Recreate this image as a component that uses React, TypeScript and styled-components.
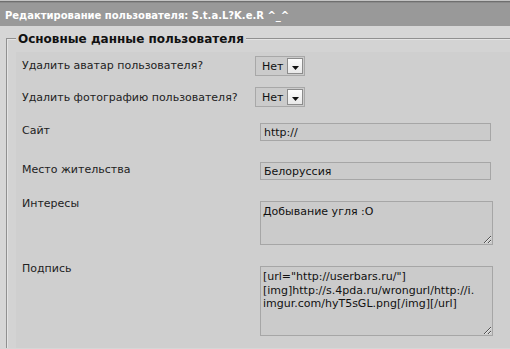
import React from 'react'
import styled, { createGlobalStyle } from 'styled-components'

const GlobalStyle = createGlobalStyle`
  html, body {
    margin: 0;
    padding: 0;
    background: #d6d6d6;
    overflow: hidden;
  }
  body {
    font-family: "DejaVu Sans", Verdana, sans-serif;
    font-size: 11px;
    color: #222;
  }
`

const TitleBar = styled.header`
  height: 26px;
  box-sizing: border-box;
  border-top: 1px solid #c4c4c4;
  box-shadow: inset 0 1px 0 #6f6f6f, inset 0 2px 0 #8a8a8a;
  background: #999;
  color: #fff;
  font-weight: bold;
  font-size: 10px;
  display: flex;
  align-items: center;
  padding: 4px 0 0 5px;
  white-space: nowrap;
`

const Page = styled.div`
  padding: 6px 0 0 6px;
`

const Fieldset = styled.fieldset`
  box-sizing: border-box;
  width: 100%;
  margin: 0;
  padding: 6px 0 0 8px;
  background: #d3d3d3;
  border: 2px groove #e4e4e4;
  border-right: none;
  border-bottom: none;
`

const Legend = styled.legend`
  font-size: 12px;
  font-weight: bold;
  color: #111;
  padding: 0 2px;
  margin-left: 0;
`

const Rows = styled.div`
  background: #cfcfcf;
  padding: 0 0 12px 6px;
  display: flex;
  flex-direction: column;
`

const Row = styled.div<{ $top: number }>`
  display: grid;
  grid-template-columns: 233px 260px;
  align-items: start;
  margin-top: ${p => p.$top}px;
`

const Label = styled.div<{ $shift: number }>`
  margin-top: ${p => p.$shift}px;
  line-height: 13px;
`

const SelectBox = styled.div`
  display: inline-flex;
  align-items: center;
  gap: 4px;
  width: 48px;
  height: 18px;
  box-sizing: content-box;
  border: 1px solid #a8a8a8;
  background: #cbcbcb;
  font-size: 11px;
  color: #111;
  span.val {
    padding-left: 6px;
  }
`

const ArrowButton = styled.span`
  width: 14px;
  height: 14px;
  border: 1px solid #8c8c8c;
  background: linear-gradient(#fdfdfd, #e8e8e8);
  display: flex;
  align-items: flex-end;
  justify-content: center;
  box-sizing: content-box;
  svg {
    margin-bottom: 3px;
  }
`

const TextInput = styled.input`
  margin-left: 5px;
  width: 231px;
  height: 18px;
  box-sizing: border-box;
  border: 1px solid #a6a6a6;
  background: #cbcbcb;
  font-family: "DejaVu Sans", Verdana, sans-serif;
  font-size: 11px;
  color: #111;
  padding: 0 3px;
  outline: none;
`

const TextArea = styled.textarea<{ $h: number }>`
  margin-left: 5px;
  width: 233px;
  height: ${p => p.$h}px;
  box-sizing: border-box;
  border: 1px solid #a6a6a6;
  background: #cbcbcb;
  font-family: "DejaVu Sans", Verdana, sans-serif;
  font-size: 11px;
  line-height: 13.5px;
  color: #111;
  padding: 3px 2px;
  outline: none;
  display: block;
  overflow: hidden;
`

const Select = ({ value }: { value: string }) => (
  <SelectBox>
    <span className="val">{value}</span>
    <ArrowButton>
      <svg width="7" height="4" viewBox="0 0 7 4">
        <path d="M0 0h7L3.5 4z" fill="#111" />
      </svg>
    </ArrowButton>
  </SelectBox>
)

const App = () => {
  return (
    <>
      <GlobalStyle />
      <TitleBar>Редактирование пользователя: S.t.a.L?K.e.R ^_^</TitleBar>
      <Page>
        <Fieldset>
          <Legend>Основные данные пользователя</Legend>
          <Rows>
            <Row $top={4}>
              <Label $shift={3}>Удалить аватар пользователя?</Label>
              <Select value="Нет" />
            </Row>
            <Row $top={11}>
              <Label $shift={4}>Удалить фотографию пользователя?</Label>
              <Select value="Нет" />
            </Row>
            <Row $top={16}>
              <Label $shift={1}>Сайт</Label>
              <TextInput readOnly value="http://" />
            </Row>
            <Row $top={21}>
              <Label $shift={1}>Место жительства</Label>
              <TextInput readOnly value="Белоруссия" />
            </Row>
            <Row $top={21}>
              <Label $shift={-4}>Интересы</Label>
              <TextArea $h={44} readOnly value="Добывание угля :O" />
            </Row>
            <Row $top={21}>
              <Label $shift={-4}>Подпись</Label>
              <TextArea
                $h={70}
                readOnly
                value={'[url="http://userbars.ru/"]\n[img]http://s.4pda.ru/wrongurl/http://i.\nimgur.com/hyT5sGL.png[/img][/url]'}
              />
            </Row>
          </Rows>
        </Fieldset>
      </Page>
    </>
  )
}

export default App
